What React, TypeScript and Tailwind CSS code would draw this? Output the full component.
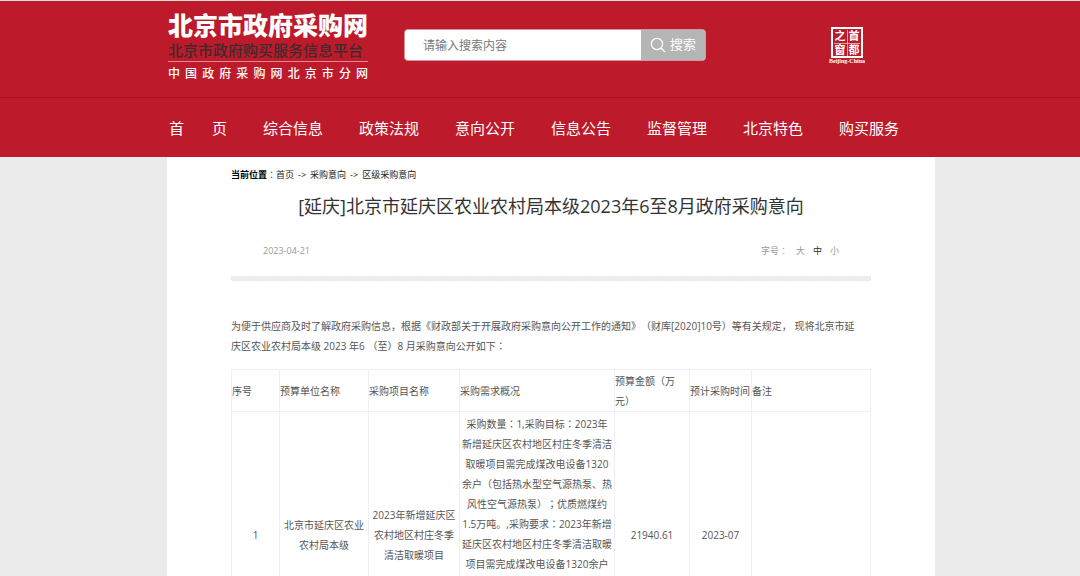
import React from "react";

const centredMarks = /([（）：；])/;

/** Sets full-width marks in the middle of their cell. */
function Zh({ children }: { children: string }) {
  return (
    <>
      {children.split(centredMarks).map((part, i) =>
        centredMarks.test(part) ? (
          <span key={i} lang="zh-TW" className="font-['Noto_Sans_CJK_TC',sans-serif]">
            {part}
          </span>
        ) : (
          part
        ),
      )}
    </>
  );
}

function Lines({ items }: { items: string[] }) {
  return (
    <>
      {items.map((line) => (
        <span key={line} className="block whitespace-nowrap">
          <Zh>{line}</Zh>
        </span>
      ))}
    </>
  );
}

const navItems = [
  "综合信息",
  "政策法规",
  "意向公开",
  "信息公告",
  "监督管理",
  "北京特色",
  "购买服务",
];

const summary = [
  "采购数量：1,采购目标：2023年",
  "新增延庆区农村地区村庄冬季清洁",
  "取暖项目需完成煤改电设备1320",
  "余户（包括热水型空气源热泵、热",
  "风性空气源热泵）；优质燃煤约",
  "1.5万吨。,采购要求：2023年新增",
  "延庆区农村地区村庄冬季清洁取暖",
  "项目需完成煤改电设备1320余户",
];

function Seal() {
  return (
    <svg width="36" height="38" viewBox="0 0 36 38" role="img" aria-label="首都之窗" fill="#fff">
      <rect x="3" y="2" width="30" height="29" fill="none" stroke="#fff" strokeWidth="2" />
      <path d="M18.5 4v26M5 17.5h26" stroke="#fff" strokeWidth="1" opacity="0.6" />
      <g fontFamily="'Noto Sans CJK SC', sans-serif" fontWeight="700" fontSize="11" textAnchor="middle">
        <text x="11" y="14">之</text>
        <text x="25" y="14">首</text>
        <text x="11" y="28">窗</text>
        <text x="25" y="28">都</text>
      </g>
      <text x="18" y="37" fontFamily="'Liberation Serif', serif" fontWeight="700" fontSize="6" textAnchor="middle">
        Beijing-China
      </text>
    </svg>
  );
}

function Header() {
  return (
    <header className="border-t border-[#dcdcdc] bg-[#bd1a2c] text-white">
      <div className="flex h-24 items-start pl-[168px]">
        <a href="#" className="block w-[200px] pt-2">
          <span className="block whitespace-nowrap text-[25px] leading-[33px] font-black">北京市政府采购网</span>
          <span className="block whitespace-nowrap text-[15px] leading-[17px] font-medium text-[#402a2d]">
            北京市政府购买服务信息平台
          </span>
          <span className="mt-0.5 block border-t border-[#dd8a92] pt-0.5 text-[12px] leading-[20px] font-medium [text-align-last:justify]">
            中国政府采购网北京市分网
          </span>
        </a>
        <form
          className="mt-7 ml-9 flex h-8 w-[302px] overflow-hidden rounded border border-[#d9939b] bg-white"
          onSubmit={(e) => e.preventDefault()}
        >
          <input
            aria-label="搜索"
            type="text"
            placeholder="请输入搜索内容"
            className="min-w-0 flex-1 pt-0.5 pl-[18px] text-[12px] text-gray-700 outline-none placeholder:text-[#777]"
          />
          <button type="submit" className="flex w-16 items-center justify-center gap-1 bg-[#b5b5b5] text-[13px] text-white">
            <svg width="16" height="16" viewBox="0 0 16 16" fill="none" stroke="#fff" strokeWidth="1.2" aria-hidden="true">
              <circle cx="7" cy="7" r="5.6" />
              <path d="M11 11l4 4" />
            </svg>
            搜索
          </button>
        </form>
        <a href="#" className="mt-[25px] ml-[123px]">
          <Seal />
        </a>
      </div>
      <nav className="flex h-[60px] items-center border-t border-[#a01223] pt-0.5 pl-[169px] text-[15px]">
        <a href="#" className="flex w-[94px] gap-7 whitespace-nowrap">
          <span>首</span>
          <span>页</span>
        </a>
        {navItems.map((item) => (
          <a key={item} href="#" className="w-24 whitespace-nowrap">
            {item}
          </a>
        ))}
      </nav>
    </header>
  );
}

function NoticeTable() {
  const cell = "border border-[#efeff5] p-0";
  return (
    <table className="mt-[13px] w-full table-fixed border-collapse text-[10px] leading-[20px]">
      <colgroup>
        <col className="w-[48px]" />
        <col className="w-[89px]" />
        <col className="w-[91px]" />
        <col className="w-[155px]" />
        <col className="w-[75px]" />
        <col className="w-[62px]" />
        <col />
      </colgroup>
      <thead>
        <tr className="h-[42px] text-left whitespace-nowrap [&>th]:font-normal">
          <th className={cell}>序号</th>
          <th className={cell}>预算单位名称</th>
          <th className={cell}>采购项目名称</th>
          <th className={cell}>采购需求概况</th>
          <th className={cell}>
            <Lines items={["预算金额（万", "元）"]} />
          </th>
          <th className={cell}>预计采购时间</th>
          <th className={cell}>备注</th>
        </tr>
      </thead>
      <tbody>
        <tr className="h-[246px] text-center">
          <td className={cell}>1</td>
          <td className={cell}>
            <Lines items={["北京市延庆区农业", "农村局本级"]} />
          </td>
          <td className={cell}>
            <Lines items={["2023年新增延庆区", "农村地区村庄冬季", "清洁取暖项目"]} />
          </td>
          <td className="border border-[#efeff5] p-0 pt-0.5 align-top">
            <Lines items={summary} />
          </td>
          <td className={cell}>21940.61</td>
          <td className={cell}>2023-07</td>
          <td className={cell}></td>
        </tr>
      </tbody>
    </table>
  );
}

export default function App() {
  return (
    <div
      lang="zh-CN"
      className="min-h-screen bg-[#ebebeb] font-['Open_Sans','Noto_Sans_CJK_SC',sans-serif] text-[#555] [text-spacing-trim:space-all]"
    >
      <Header />
      <main className="mr-[145px] ml-[167px] bg-white px-16 pt-2.5 pb-10">
        <div className="flex text-[9px] leading-4 whitespace-nowrap text-[#222]">
          <b className="text-black">当前位置</b>
          <Zh>：</Zh>
          <div className="flex gap-1">
            <a href="#">首页</a>
            <span>-&gt;</span>
            <a href="#">采购意向</a>
            <span>-&gt;</span>
            <a href="#">区级采购意向</a>
          </div>
        </div>
        <h1 className="mt-[9px] text-center text-[18px] leading-7 text-[#333]">
          [延庆]北京市延庆区农业农村局本级2023年6至8月政府采购意向
        </h1>
        <div className="mt-[21px] flex items-center justify-between px-8 text-[9px] leading-5 text-[#999]">
          <time dateTime="2023-04-21">2023-04-21</time>
          <div className="flex items-center gap-2">
            <span>
              <Zh>字号：</Zh>
            </span>
            <button type="button">大</button>
            <button type="button" className="text-[#333]">
              中
            </button>
            <button type="button">小</button>
          </div>
        </div>
        <div className="mt-[15px] h-[5px] bg-[linear-gradient(135deg,#e9e9e9_25%,#f3f3f3_25%,#f3f3f3_50%,#e9e9e9_50%,#e9e9e9_75%,#f3f3f3_75%)] bg-[length:3px_3px]"></div>
        <p className="mt-[35px] text-[10px] leading-[20px]">
          <Lines
            items={[
              "为便于供应商及时了解政府采购信息，根据《财政部关于开展政府采购意向公开工作的通知》（财库[2020]10号）等有关规定， 现将北京市延",
              "庆区农业农村局本级 2023 年6 （至）8 月采购意向公开如下：",
            ]}
          />
        </p>
        <NoticeTable />
      </main>
    </div>
  );
}
